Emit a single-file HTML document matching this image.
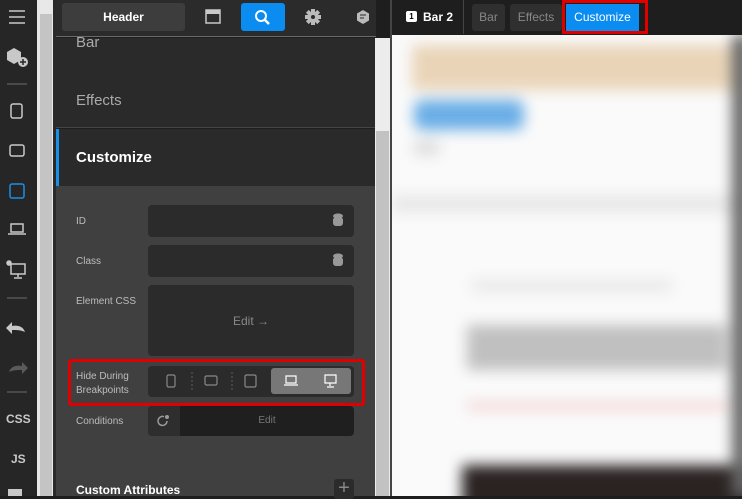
<!DOCTYPE html>
<html><head><style>
*{margin:0;padding:0;box-sizing:border-box}
body{width:742px;height:496px;overflow:hidden;background:#1e1e1e;font-family:"Liberation Sans",sans-serif;position:relative}
.a{position:absolute}
.lbl{position:absolute;left:76px;color:#bdbdbd;font-size:10px}
.inp{position:absolute;left:148px;width:206px;background:#2b2b2b;border-radius:4px}
</style></head><body>
<!-- left sidebar -->
<div class="a" style="left:0;top:0;width:37px;height:496px;background:#262626"></div>
<svg class="a" style="left:0;top:0" width="37" height="496" fill="none" stroke="#c8c8c8" stroke-width="1.5">
<path d="M9 11h16M9 17h16M9 23h16"/>
<path d="M7 52l7-4 7 4v8l-7 4-7-4z" fill="#c8c8c8" stroke="none"/><circle cx="23" cy="62" r="5" fill="#c8c8c8" stroke="none"/><path d="M23 59v6M20 62h6" stroke="#262626"/>
<path d="M7 84h20" stroke="#555"/>
<rect x="11" y="104" width="11" height="14" rx="2"/>
<rect x="10" y="145" width="14" height="11" rx="2"/>
<rect x="10" y="184" width="14" height="14" rx="2" stroke="#1a8fe6"/>
<path d="M11 224h12v8H11zM8 234h18"/>
<path d="M11 264h14v10H11zM18 274v3M14 278h8"/><circle cx="9" cy="263" r="2" fill="#c8c8c8"/>
<path d="M7 298h20M7 392h20" stroke="#555"/>
<path d="M25 332c-2-6-8-7-13-6v-4l-6 6 6 6v-4c5 0 9 0 13 2z" fill="#c8c8c8" stroke="none"/>
<path d="M9 372c2-6 8-7 13-6v-4l6 6-6 6v-4c-5 0-9 0-13 2z" fill="#5a5a5a" stroke="none"/>
</svg>
<div class="a" style="left:6px;top:412px;color:#c8c8c8;font-size:12px;font-weight:bold">CSS</div>
<div class="a" style="left:11px;top:452px;color:#c8c8c8;font-size:12px;font-weight:bold">JS</div>
<div class="a" style="left:8px;top:489px;width:14px;height:7px;background:#c8c8c8"></div>
<!-- scrollbar strip -->
<div class="a" style="left:37px;top:0;width:16px;height:496px;background:#e8e8e8"></div>
<div class="a" style="left:40px;top:14px;width:12px;height:482px;background:#c4c4c4"></div>
<div class="a" style="left:53px;top:0;width:3px;height:496px;background:#2a2a2a"></div>
<!-- panel -->
<div class="a" style="left:56px;top:0;width:320px;height:37px;background:#2b2b2b;border-bottom:1px solid #6a6a6a"></div>
<div class="a" style="left:62px;top:3px;width:123px;height:28px;background:#3d3d3d;border-radius:3px;color:#fff;font-size:12px;font-weight:bold;text-align:center;line-height:28px">Header</div>
<svg class="a" style="left:195px;top:0" width="180" height="36">
<rect x="11" y="10" width="14" height="13" fill="none" stroke="#c8c8c8" stroke-width="1.5"/><rect x="11" y="10" width="14" height="4" fill="#c8c8c8"/>
<rect x="46" y="3" width="44" height="28" rx="3" fill="#0a8cf0"/><circle cx="66" cy="16" r="5" fill="none" stroke="#fff" stroke-width="2"/><path d="M70 20l4 4" stroke="#fff" stroke-width="2.5"/>
<g fill="#bbb"><rect x="116" y="9" width="4" height="16"/><rect x="110" y="15" width="16" height="4"/><rect x="116" y="9" width="4" height="16" transform="rotate(45 118 17)"/><rect x="116" y="9" width="4" height="16" transform="rotate(-45 118 17)"/><circle cx="118" cy="17" r="5.5"/></g><circle cx="118" cy="17" r="2" fill="#2b2b2b"/>
<path d="M168 10l6 3.5v7l-6 3.5-6-3.5v-7z" fill="#bbb"/><path d="M165 15h6M165 18h4" stroke="#2b2b2b"/>
</svg>
<div class="a" style="left:56px;top:38px;width:320px;height:90px;background:#2a2a2a;border-bottom:1px solid #444"></div>
<div class="a" style="left:76px;top:34px;color:#aaa;font-size:15px">Bar</div>
<div class="a" style="left:76px;top:92px;color:#aaa;font-size:15px">Effects</div>
<div class="a" style="left:56px;top:129px;width:320px;height:57px;background:#2a2a2a;border-left:3px solid #1a8fe6"></div>
<div class="a" style="left:76px;top:149px;color:#fff;font-size:15px;font-weight:bold">Customize</div>
<div class="a" style="left:56px;top:186px;width:320px;height:310px;background:#404040"></div>
<div class="lbl" style="top:216px">ID</div>
<div class="inp" style="top:205px;height:32px"></div>
<div class="lbl" style="top:256px">Class</div>
<div class="inp" style="top:245px;height:32px"></div>
<svg class="a" style="left:332px;top:213px" width="12" height="60"><g fill="#999"><ellipse cx="6" cy="3" rx="5" ry="2.5"/><rect x="1" y="4" width="10" height="9" rx="3"/><ellipse cx="6" cy="43" rx="5" ry="2.5"/><rect x="1" y="44" width="10" height="9" rx="3"/></g></svg>
<div class="lbl" style="top:296px">Element CSS</div>
<div class="inp" style="top:285px;height:71px;color:#8a8a8a;font-size:12px;text-align:center;line-height:72px">Edit →</div>
<div class="lbl" style="top:370px;line-height:14px">Hide During<br>Breakpoints</div>
<div class="inp" style="top:366px;height:31px"></div>
<div class="a" style="left:271px;top:368px;width:80px;height:26px;background:#777;border-radius:3px"></div>
<svg class="a" style="left:148px;top:366px" width="206" height="31" fill="none" stroke="#888" stroke-width="1.2">
<path d="M44 6v20M84 6v20" stroke="#555" stroke-dasharray="2 2"/>
<rect x="19" y="9" width="8" height="12" rx="1.5"/><rect x="57" y="10" width="12" height="9" rx="1.5"/><rect x="97" y="9" width="11" height="12" rx="1.5"/>
<path d="M138 10h10v7h-10zM136 19h14" stroke="#fff"/><path d="M177 9h11v8h-11zM182 17v3M179 21h7" stroke="#fff"/>
</svg>
<div class="lbl" style="top:416px">Conditions</div>
<div class="inp" style="top:406px;height:30px;background:#1f1f1f;color:#777;font-size:10px;text-align:center;line-height:30px;padding-left:32px">Edit</div>
<div class="a" style="left:148px;top:406px;width:32px;height:30px;background:#2e2e2e;border-radius:4px 0 0 4px"></div>
<svg class="a" style="left:157px;top:414px" width="14" height="14"><path d="M10 7a4.5 4.5 0 1 1-3-4.3" fill="none" stroke="#999" stroke-width="1.5"/><circle cx="10" cy="3" r="2" fill="#999"/></svg>
<div class="a" style="left:68px;top:359px;width:297px;height:47px;border:3px solid #e00000;border-radius:3px"></div>
<div class="a" style="left:76px;top:483px;color:#fff;font-size:12px;font-weight:bold">Custom Attributes</div>
<div class="a" style="left:334px;top:479px;width:20px;height:20px;background:#2b2b2b;border-radius:3px;color:#888;font-size:20px;line-height:18px;text-align:center">+</div>
<!-- right scroll -->
<div class="a" style="left:375px;top:38px;width:15px;height:458px;background:#ececec"></div>
<div class="a" style="left:376px;top:131px;width:13px;height:365px;background:#c2c2c2"></div>
<div class="a" style="left:390px;top:0;width:2px;height:496px;background:#444"></div>
<!-- preview top bar -->
<div class="a" style="left:392px;top:0;width:350px;height:35px;background:#1e1e1e"></div>
<div class="a" style="left:463px;top:0;width:1px;height:34px;background:#444"></div>
<div class="a" style="left:406px;top:11px;width:11px;height:11px;background:#fff;border-radius:2px;color:#000;font-size:8px;font-weight:bold;text-align:center;line-height:11px">1</div>
<div class="a" style="left:423px;top:10px;color:#fff;font-size:12px;font-weight:bold">Bar 2</div>
<div class="a" style="left:472px;top:4px;width:33px;height:27px;background:#2f2f2f;border-radius:3px;color:#888;font-size:12px;text-align:center;line-height:27px">Bar</div>
<div class="a" style="left:510px;top:4px;width:52px;height:27px;background:#2f2f2f;border-radius:3px;color:#888;font-size:12px;text-align:center;line-height:27px">Effects</div>
<div class="a" style="left:566px;top:4px;width:73px;height:27px;background:#0a8cf0;color:#fff;font-size:12px;text-align:center;line-height:27px">Customize</div>
<div class="a" style="left:562px;top:0;width:86px;height:34px;border:3px solid #e00000"></div>
<!-- preview content -->
<div class="a" style="left:392px;top:35px;width:350px;height:461px;background:#fafafa;overflow:hidden">
<div class="a" style="left:0;top:0;width:350px;height:461px;filter:blur(7px)">
<div class="a" style="left:20px;top:10px;width:320px;height:45px;background:#e9d4b8"></div>
<div class="a" style="left:22px;top:65px;width:110px;height:30px;background:#6aaee6;border-radius:8px"></div>
<div class="a" style="left:22px;top:105px;width:25px;height:15px;background:#ddd"></div>
<div class="a" style="left:0;top:160px;width:350px;height:18px;background:#e8e8e8"></div>
<div class="a" style="left:80px;top:245px;width:200px;height:12px;background:#e8e8e8"></div>
<div class="a" style="left:75px;top:290px;width:260px;height:45px;background:#c0c0c0"></div>
<div class="a" style="left:75px;top:368px;width:260px;height:6px;background:#f3c8c8"></div>
<div class="a" style="left:70px;top:430px;width:300px;height:50px;background:#2a2322"></div>
<div class="a" style="left:340px;top:0;width:20px;height:461px;background:#666"></div>
</div>
</div>
</body></html>
